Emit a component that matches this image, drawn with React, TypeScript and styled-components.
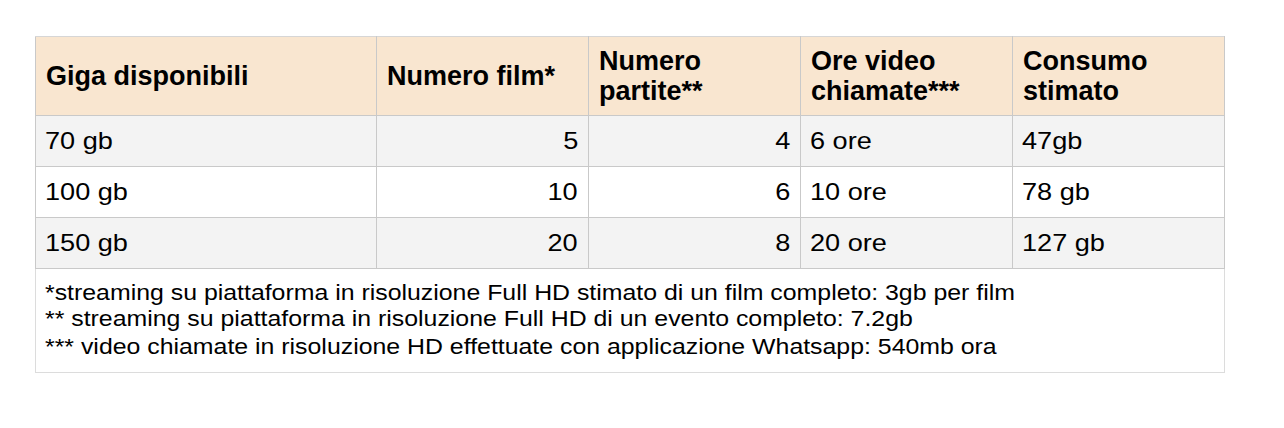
import { createGlobalStyle, styled } from "styled-components";

const GlobalStyle = createGlobalStyle`
  html, body {
    margin: 0;
    padding: 0;
    background: #ffffff;
  }
  body {
    font-family: "Liberation Sans", Arial, sans-serif;
    color: #000000;
  }
`;

const Page = styled.div`
  padding: 36px 0 0 35px;
`;

const Table = styled.table`
  border-collapse: collapse;
  table-layout: fixed;
  width: 1189px;
  border: 1px solid #d6d6d6;
`;

const HeadRow = styled.tr`
  background: #f9e6d0;
  height: 79px;
`;

const Row = styled.tr<{ $alt?: boolean }>`
  background: ${(p) => (p.$alt ? "#f3f3f3" : "#ffffff")};
  height: 51px;
`;

const Th = styled.th`
  border: 1px solid #c9c9c9;
  border-top-color: #d6d6d6;
  padding: 0 10px;
  text-align: left;
  vertical-align: middle;
  font-size: 27px;
  line-height: 30px;
  font-weight: 700;
`;

const Td = styled.td<{ $right?: boolean }>`
  border: 1px solid #c9c9c9;
  padding: 0 10px 0 9px;
  text-align: ${(p) => (p.$right ? "right" : "left")};
  vertical-align: middle;
  font-size: 24px;
  line-height: 28px;
  white-space: nowrap;
`;

/* the sheet's body text renders a little wider than plain Arial */
const Wide = styled.span<{ $right?: boolean }>`
  display: inline-block;
  transform: scaleX(1.13);
  transform-origin: ${(p) => (p.$right ? "right" : "left")} center;
`;

const NoteCell = styled.td`
  border: 1px solid #dcdcdc;
  border-top-color: #c9c9c9;
  padding: 11px 9px 12px 9px;
  height: 104px;
  box-sizing: border-box;
  vertical-align: top;
  font-size: 22px;
  white-space: nowrap;
`;

const NoteLine = styled.div<{ $gap?: number }>`
  line-height: 26px;
  margin-top: ${(p) => p.$gap ?? 0}px;
`;

const rows = [
  { giga: "70 gb", film: "5", partite: "4", ore: "6 ore", consumo: "47gb" },
  { giga: "100 gb", film: "10", partite: "6", ore: "10 ore", consumo: "78 gb" },
  { giga: "150 gb", film: "20", partite: "8", ore: "20 ore", consumo: "127 gb" },
];

const notes = [
  "*streaming su piattaforma in risoluzione Full HD stimato di un film completo: 3gb per film",
  "** streaming su piattaforma in risoluzione Full HD di un evento completo: 7.2gb",
  "*** video chiamate in risoluzione HD effettuate con applicazione Whatsapp: 540mb ora",
];

export default function App() {
  return (
    <>
      <GlobalStyle />
      <Page>
        <Table>
          <colgroup>
            <col style={{ width: 341 }} />
            <col style={{ width: 212 }} />
            <col style={{ width: 212 }} />
            <col style={{ width: 212 }} />
            <col style={{ width: 212 }} />
          </colgroup>
          <thead>
            <HeadRow>
              <Th>Giga disponibili</Th>
              <Th>Numero film*</Th>
              <Th>
                Numero
                <br />
                partite**
              </Th>
              <Th>
                Ore video
                <br />
                chiamate***
              </Th>
              <Th>
                Consumo
                <br />
                stimato
              </Th>
            </HeadRow>
          </thead>
          <tbody>
            {rows.map((r, i) => (
              <Row key={r.giga} $alt={i !== 1}>
                <Td>
                  <Wide>{r.giga}</Wide>
                </Td>
                <Td $right>
                  <Wide $right>{r.film}</Wide>
                </Td>
                <Td $right>
                  <Wide $right>{r.partite}</Wide>
                </Td>
                <Td>
                  <Wide>{r.ore}</Wide>
                </Td>
                <Td>
                  <Wide>{r.consumo}</Wide>
                </Td>
              </Row>
            ))}
            <tr>
              <NoteCell colSpan={5}>
                {notes.map((n, i) => (
                  <NoteLine key={i} $gap={i === 2 ? 2 : 0}>
                    <Wide>{n}</Wide>
                  </NoteLine>
                ))}
              </NoteCell>
            </tr>
          </tbody>
        </Table>
      </Page>
    </>
  );
}
